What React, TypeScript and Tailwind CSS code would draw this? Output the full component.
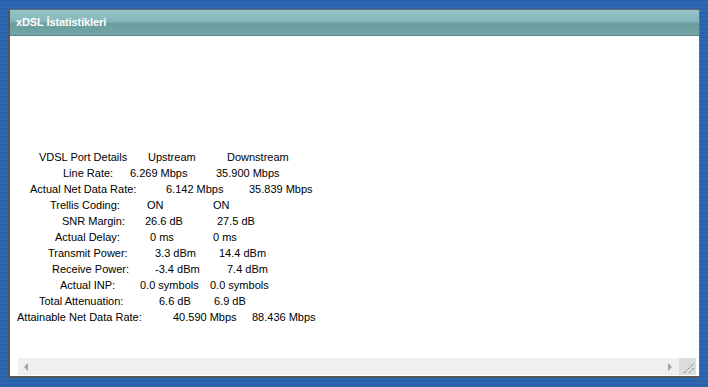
import React from 'react';

type Row = {
  label: string;
  up: string;
  down: string;
  labelCls: string;
  upCls: string;
};

// column offsets copied from the device page, each row sits a bit differently
const rows: Row[] = [
  { label: 'VDSL Port Details', up: 'Upstream', down: 'Downstream', labelCls: 'w-[138px] pl-[29px]', upCls: 'w-[79px]' },
  { label: 'Line Rate:', up: '6.269 Mbps', down: '35.900 Mbps', labelCls: 'w-[120px] pl-[53px]', upCls: 'w-[86px]' },
  { label: 'Actual Net Data Rate:', up: '6.142 Mbps', down: '35.839 Mbps', labelCls: 'w-[156px] pl-[20px]', upCls: 'w-[83px]' },
  { label: 'Trellis Coding:', up: 'ON', down: 'ON', labelCls: 'w-[137px] pl-[40px]', upCls: 'w-[66px]' },
  { label: 'SNR Margin:', up: '26.6 dB', down: '27.5 dB', labelCls: 'w-[135px] pl-[52px]', upCls: 'w-[72px]' },
  { label: 'Actual Delay:', up: '0 ms', down: '0 ms', labelCls: 'w-[140px] pl-[45px]', upCls: 'w-[63px]' },
  { label: 'Transmit Power:', up: '3.3 dBm', down: '14.4 dBm', labelCls: 'w-[145px] pl-[38px]', upCls: 'w-[64px]' },
  { label: 'Receive Power:', up: '-3.4 dBm', down: '7.4 dBm', labelCls: 'w-[145px] pl-[42px]', upCls: 'w-[72px]' },
  { label: 'Actual INP:', up: '0.0 symbols', down: '0.0 symbols', labelCls: 'w-[130px] pl-[50px]', upCls: 'w-[70px]' },
  { label: 'Total Attenuation:', up: '6.6 dB', down: '6.9 dB', labelCls: 'w-[149px] pl-[29px]', upCls: 'w-[55px]' },
  { label: 'Attainable Net Data Rate:', up: '40.590 Mbps', down: '88.436 Mbps', labelCls: 'w-[163px] pl-[7px]', upCls: 'w-[79px]' },
];

const StatRow: React.FC<{ row: Row }> = ({ row }) => (
  <div className="flex h-4 items-center whitespace-nowrap">
    <span className={`shrink-0 ${row.labelCls}`}>{row.label}</span>
    <span className={`shrink-0 ${row.upCls}`}>{row.up}</span>
    <span className="shrink-0">{row.down}</span>
  </div>
);

export default function App() {
  return (
    <div
      className="w-[708px] h-[387px] overflow-hidden pt-[9px] pl-[8px] bg-[repeating-linear-gradient(180deg,#2961ab_0px,#2961ab_2px,#2d68b2_2px,#2d68b2_4px)]"
      style={{ fontFamily: '"Liberation Sans", Arial, sans-serif' }}
    >
      <div className="w-[692px] h-[369px] flex flex-col bg-white border-t border-r border-[#6b6b6b] border-l-2 border-b-2 border-l-[#555555] border-b-[#555555]">
        {/* Header */}
        <div className="h-[26px] shrink-0 flex items-center pl-[6px] border-b border-[#5d7f80] bg-[linear-gradient(180deg,#94c4c7_0%,#86b7ba_45%,#6b9c9e_55%,#73a6a8_100%)]">
          <span className="text-white font-bold text-[11px] tracking-[-0.1px]">xDSL İstatistikleri</span>
        </div>

        {/* Content */}
        <div className="flex-1 flex flex-col">
          <div className="flex-1 pt-[113px] text-[11px] text-black leading-4">
            {rows.map((r) => (
              <StatRow key={r.label} row={r} />
            ))}
          </div>

          {/* Horizontal scrollbar */}
          <div className="flex h-[17px] ml-[8px] mr-[3px] mb-[1px]">
            <div className="flex-1 flex items-center justify-between bg-[#efefef] px-[6px]">
              <svg width="5" height="8" viewBox="0 0 5 8">
                <polygon points="4,0 4,8 0,4" fill="#a3a3a3" />
              </svg>
              <svg width="5" height="8" viewBox="0 0 5 8">
                <polygon points="0,0 0,8 4,4" fill="#a3a3a3" />
              </svg>
            </div>
            <div className="w-[17px] bg-[#dcdcdc] flex items-end justify-end">
              <svg width="17" height="17" viewBox="0 0 17 17">
                <line x1="5" y1="15" x2="15" y2="5" stroke="#555" strokeWidth="1" strokeDasharray="1 1" />
                <line x1="10" y1="15" x2="15" y2="10" stroke="#555" strokeWidth="1" strokeDasharray="1 1" />
              </svg>
            </div>
          </div>
        </div>
      </div>
    </div>
  );
}
